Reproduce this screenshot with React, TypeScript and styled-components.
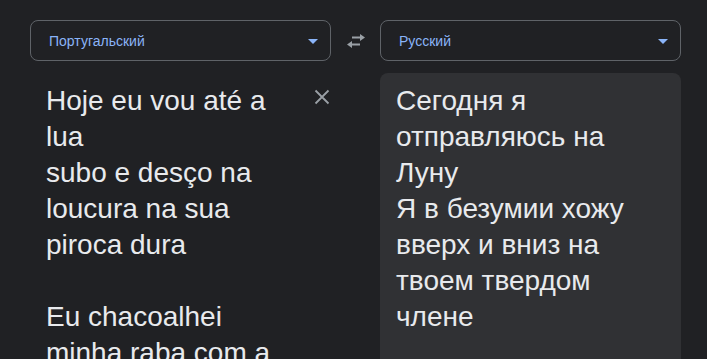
import React from "react";
import styled, { createGlobalStyle } from "styled-components";

const Global = createGlobalStyle`
  html, body {
    margin: 0;
    background: #202124;
    font-family: "Liberation Sans", Arial, sans-serif;
  }
`;

const Page = styled.div`
  display: grid;
  grid-template-columns: 301px 49px 301px;
  padding: 20px 0 0 30px;
  height: 339px;
  overflow: hidden;
`;

const Column = styled.div`
  display: flex;
  flex-direction: column;
  gap: 12px;
`;

const Select = styled.div`
  height: 41px;
  box-sizing: border-box;
  border: 1px solid #5f6368;
  border-radius: 8px;
  display: flex;
  align-items: center;
  justify-content: space-between;
  padding: 0 12px 0 18px;
  color: #8ab4f8;
  font-size: 14px;
`;

const Caret = styled.span`
  width: 0;
  height: 0;
  border-left: 5px solid transparent;
  border-right: 5px solid transparent;
  border-top: 5px solid #8ab4f8;
  margin-top: 2px;
`;

const Swap = styled.div`
  height: 41px;
  display: flex;
  align-items: center;
  justify-content: center;
`;

const Panel = styled.div<{ $filled?: boolean }>`
  display: flex;
  align-items: flex-start;
  justify-content: space-between;
  background: ${(p) => (p.$filled ? "#303134" : "transparent")};
  border-radius: 8px;
  padding: ${(p) => (p.$filled ? "10px 16px" : "10px 0 0 16px")};
  min-height: 300px;
`;

const Text = styled.div<{ $width: number }>`
  width: ${(p) => p.$width}px;
  color: #e8eaed;
  font-size: 28px;
  line-height: 36px;
  white-space: pre-wrap;
`;

const Clear = styled.button`
  background: none;
  border: none;
  padding: 0;
  margin: 5px 0 0 0;
  width: 18px;
  height: 18px;
  cursor: pointer;
`;

const source = `Hoje eu vou até a lua
subo e desço na loucura na sua piroca dura

Eu chacoalhei minha raba com a`;

const target = `Сегодня я отправляюсь на Луну
Я в безумии хожу вверх и вниз на твоем твердом члене`;

export default function App() {
  return (
    <>
      <Global />
      <Page>
        <Column>
          <Select>
            Португальский
            <Caret />
          </Select>
          <Panel>
            <Text $width={236}>{source}</Text>
            <Clear aria-label="clear">
              <svg width="18" height="18" viewBox="0 0 18 18">
                <path d="M2.5 2.5 L15.5 15.5 M15.5 2.5 L2.5 15.5" stroke="#9aa0a6" strokeWidth="1.8" />
              </svg>
            </Clear>
          </Panel>
        </Column>
        <Swap>
          <svg width="20" height="16" viewBox="0 0 20 16">
            <path d="M14 1 L19 4.5 L14 8 Z M6 8 L1 11.5 L6 15 Z" fill="#9aa0a6" />
            <path d="M6 4.5 H15 M5 11.5 H14" stroke="#9aa0a6" strokeWidth="2.2" />
          </svg>
        </Swap>
        <Column>
          <Select>
            Русский
            <Caret />
          </Select>
          <Panel $filled>
            <Text $width={246}>{target}</Text>
          </Panel>
        </Column>
      </Page>
    </>
  );
}
